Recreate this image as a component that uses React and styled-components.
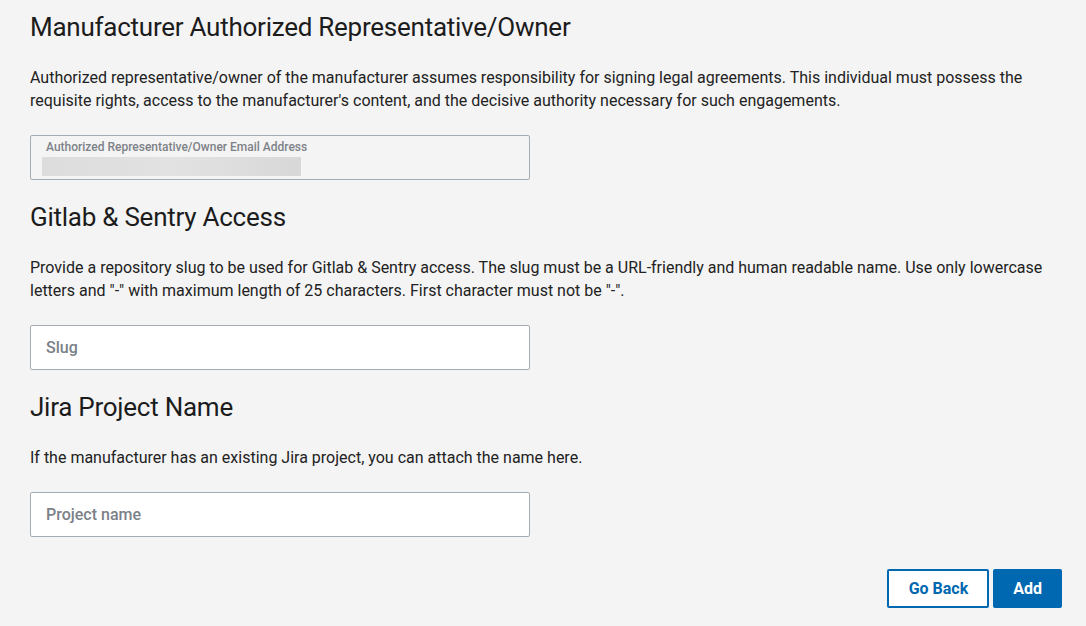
import styled, { createGlobalStyle } from "styled-components";

const GlobalStyle = createGlobalStyle`
  body {
    margin: 0;
    background: #f4f4f4;
    font-family: Roboto, "Liberation Sans", sans-serif;
    color: #222;
  }
`;

const Page = styled.div`
  padding: 11px 24px 17px 30px;
  display: flex;
  flex-direction: column;
`;

const Section = styled.section`
  display: flex;
  flex-direction: column;
  margin-bottom: 21px;
`;

const Heading = styled.h2`
  margin: 0;
  font-size: 26px;
  line-height: 32px;
  font-weight: 400;
  color: #1c1c1c;
  letter-spacing: -0.25px;
`;

const Text = styled.p`
  margin: 22.5px 0 23.5px;
  font-size: 16px;
  line-height: 23px;
  color: #222;
  max-width: 1026px;
`;

const Field = styled.div`
  box-sizing: border-box;
  width: 500px;
  height: 45px;
  border: 1px solid #a3acb5;
  border-radius: 2px;
  background: ${(p) => (p.disabled ? "#f4f4f4" : "#fff")};
  display: flex;
  flex-direction: column;
  justify-content: center;
  padding: ${(p) => (p.disabled ? "0 0 0 11px" : "0 15px")};
`;

const Label = styled.span`
  font-size: 12px;
  line-height: 14px;
  font-weight: 500;
  color: #7d8288;
  padding-left: 4px;
  align-self: flex-start;
`;

const Skeleton = styled.div`
  width: 259px;
  height: 19px;
  margin-top: 3px;
  background: linear-gradient(90deg, #dcdcdc 0%, #e2e2e2 50%, #d8d8d8 100%);
`;

const Input = styled.input`
  border: none;
  outline: none;
  background: transparent;
  font-family: Roboto, "Liberation Sans", sans-serif;
  font-size: 16px;
  font-weight: 500;
  color: #222;
  padding: 0;

  &::placeholder {
    color: #7b8188;
  }
`;

const Actions = styled.div`
  display: flex;
  justify-content: flex-end;
  gap: 4px;
  margin-top: 11px;
`;

const Button = styled.button`
  box-sizing: border-box;
  height: 39px;
  padding: 0 ${(p) => (p.primary ? "18px" : "19px 0 20px")};
  border: 2px solid #0068b1;
  border-radius: 2px;
  background: ${(p) => (p.primary ? "#0068b1" : "#fff")};
  color: ${(p) => (p.primary ? "#fff" : "#0068b1")};
  font-family: Roboto, "Liberation Sans", sans-serif;
  font-size: 16px;
  font-weight: 700;
  cursor: pointer;
`;

export default function App() {
  return (
    <>
      <GlobalStyle />
      <Page>
        <Section>
          <Heading>Manufacturer Authorized Representative/Owner</Heading>
          <Text>
            Authorized representative/owner of the manufacturer assumes
            responsibility for signing legal agreements. This individual must
            possess the requisite rights, access to the manufacturer's content,
            and the decisive authority necessary for such engagements.
          </Text>
          <Field disabled>
            <Label>Authorized Representative/Owner Email Address</Label>
            <Skeleton />
          </Field>
        </Section>

        <Section>
          <Heading>Gitlab &amp; Sentry Access</Heading>
          <Text>
            Provide a repository slug to be used for Gitlab &amp; Sentry access.
            The slug must be a URL-friendly and human readable name. Use only
            lowercase letters and "-" with maximum length of 25 characters.
            First character must not be "-".
          </Text>
          <Field>
            <Input placeholder="Slug" />
          </Field>
        </Section>

        <Section>
          <Heading>Jira Project Name</Heading>
          <Text>
            If the manufacturer has an existing Jira project, you can attach the
            name here.
          </Text>
          <Field>
            <Input placeholder="Project name" />
          </Field>
        </Section>

        <Actions>
          <Button>Go Back</Button>
          <Button primary>Add</Button>
        </Actions>
      </Page>
    </>
  );
}
